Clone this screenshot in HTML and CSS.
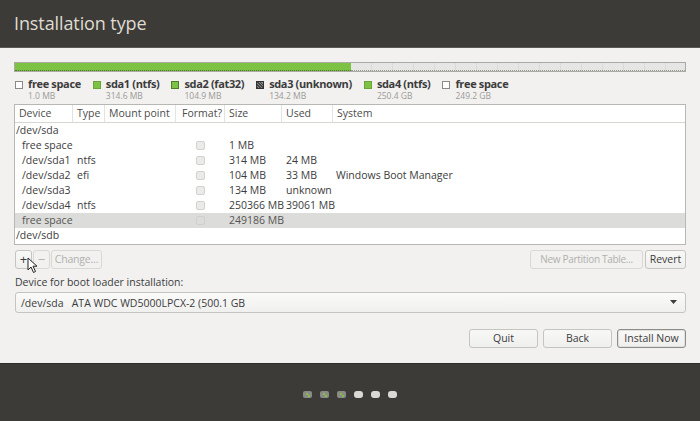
FILE: index.html
```html
<!DOCTYPE html>
<html>
<head>
<meta charset="utf-8">
<link rel="stylesheet" href="styles.css">
</head>
<body>
<div class="window">
  <header class="titlebar">Installation type</header>
  <main class="content">
    <div class="pbar">
      <div class="pbar-used" style="width:50.1%"></div>
      <div class="pbar-free"></div>
    </div>
    <div class="legend">
      <div class="leg"><span class="sw sw-free"></span><div><div class="leg-name">free space</div><div class="leg-size">1.0 MB</div></div></div>
      <div class="leg"><span class="sw sw-green"></span><div><div class="leg-name">sda1 (ntfs)</div><div class="leg-size">314.6 MB</div></div></div>
      <div class="leg"><span class="sw sw-green2"></span><div><div class="leg-name">sda2 (fat32)</div><div class="leg-size">104.9 MB</div></div></div>
      <div class="leg"><span class="sw sw-dark"></span><div><div class="leg-name">sda3 (unknown)</div><div class="leg-size">134.2 MB</div></div></div>
      <div class="leg"><span class="sw sw-green"></span><div><div class="leg-name">sda4 (ntfs)</div><div class="leg-size">250.4 GB</div></div></div>
      <div class="leg"><span class="sw sw-free"></span><div><div class="leg-name">free space</div><div class="leg-size">249.2 GB</div></div></div>
    </div>
    <div class="table">
      <div class="row head">
        <div class="c c1">Device</div><div class="c c2">Type</div><div class="c c3">Mount point</div><div class="c c4">Format?</div><div class="c c5">Size</div><div class="c c6">Used</div><div class="c c7">System</div>
      </div>
      <div class="body">
        <div class="row"><div class="c c1 top">/dev/sda</div><div class="c c2"></div><div class="c c3"></div><div class="c c4"></div><div class="c c5"></div><div class="c c6"></div><div class="c c7"></div></div>
        <div class="row"><div class="c c1 sub">free space</div><div class="c c2"></div><div class="c c3"></div><div class="c c4"><span class="cb"></span></div><div class="c c5">1 MB</div><div class="c c6"></div><div class="c c7"></div></div>
        <div class="row"><div class="c c1 sub">/dev/sda1</div><div class="c c2">ntfs</div><div class="c c3"></div><div class="c c4"><span class="cb"></span></div><div class="c c5">314 MB</div><div class="c c6">24 MB</div><div class="c c7"></div></div>
        <div class="row"><div class="c c1 sub">/dev/sda2</div><div class="c c2">efi</div><div class="c c3"></div><div class="c c4"><span class="cb"></span></div><div class="c c5">104 MB</div><div class="c c6">33 MB</div><div class="c c7">Windows Boot Manager</div></div>
        <div class="row"><div class="c c1 sub">/dev/sda3</div><div class="c c2"></div><div class="c c3"></div><div class="c c4"><span class="cb"></span></div><div class="c c5">134 MB</div><div class="c c6">unknown</div><div class="c c7"></div></div>
        <div class="row"><div class="c c1 sub">/dev/sda4</div><div class="c c2">ntfs</div><div class="c c3"></div><div class="c c4"><span class="cb"></span></div><div class="c c5">250366 MB</div><div class="c c6">39061 MB</div><div class="c c7"></div></div>
        <div class="row sel"><div class="c c1 sub">free space</div><div class="c c2"></div><div class="c c3"></div><div class="c c4"><span class="cb cb-sel"></span></div><div class="c c5">249186 MB</div><div class="c c6"></div><div class="c c7"></div></div>
        <div class="row"><div class="c c1 top">/dev/sdb</div><div class="c c2"></div><div class="c c3"></div><div class="c c4"></div><div class="c c5"></div><div class="c c6"></div><div class="c c7"></div></div>
      </div>
    </div>
    <div class="tools">
      <div class="tools-left">
        <button class="btn sq">+</button>
        <button class="btn sq dis">&minus;</button>
        <button class="btn dis chg">Change...</button>
        <svg class="cursor" width="12" height="17" viewBox="0 0 12 17"><path d="M1 1 L1 13 L4 10 L6.5 15.5 L8.5 14.5 L6 9.2 L10 9.2 Z" fill="#fff" stroke="#222" stroke-width="1" stroke-linejoin="round"/></svg>
      </div>
      <div class="tools-right">
        <button class="btn dis npt">New Partition Table...</button>
        <button class="btn rev">Revert</button>
      </div>
    </div>
    <div class="label">Device for boot loader installation:</div>
    <div class="combo">
      <span class="combo-text">/dev/sda&nbsp;&nbsp;&nbsp;ATA WDC WD5000LPCX-2 (500.1 GB</span>
      <svg width="7" height="5" viewBox="0 0 7 5"><path d="M0 0 L7 0 L3.5 4 Z" fill="#3c3c3c"/></svg>
    </div>
    <div class="actions">
      <button class="btn act">Quit</button>
      <button class="btn act">Back</button>
      <button class="btn act def">Install Now</button>
    </div>
  </main>
  <footer class="footer">
    <div class="dots">
      <span class="dot done"><i></i><i></i></span>
      <span class="dot done"><i></i><i></i></span>
      <span class="dot done"><i></i><i></i></span>
      <span class="dot todo"></span>
      <span class="dot todo"></span>
      <span class="dot todo"></span>
    </div>
  </footer>
</div>
</body>
</html>
```
FILE: styles.css
```css
* { box-sizing: border-box; }
html, body { margin: 0; padding: 0; }
body {
  width: 700px;
  height: 421px;
  overflow: hidden;
  font-family: "Open Sans", "Noto Sans", sans-serif;
  color: #3c3c3c;
  background: #f2f1f0;
}
.window { display: flex; flex-direction: column; height: 421px; }
.titlebar {
  height: 48px;
  background: #3c3b37;
  color: #dfdbd2;
  font-size: 18px;
  padding: 11px 0 0 14px;
  letter-spacing: -0.1px;
  border-bottom: 1px solid #5a5955;
}
.content {
  height: 315px;
  background: #f2f1f0;
  padding: 14px 14px 0 14px;
  display: flex;
  flex-direction: column;
}
.pbar {
  height: 10px;
  display: flex;
  border: 1px solid #a9a9a5;
  background: #e2e2e0;
}
.pbar-used {
  height: 100%;
  background: #7dc242;
  border-bottom: 1px dotted #4e7a2a;
}
.pbar-free {
  flex: 1;
  background: repeating-linear-gradient(90deg, #e6e6e4 0 20px, #dadad8 20px 21px);
  border-bottom: 1px dotted #9a9a96;
}
.legend {
  display: flex;
  gap: 12px;
  padding: 5px 0 0 1px;
  height: 32px;
}
.leg { display: flex; gap: 5px; align-items: flex-start; }
.sw {
  width: 8px; height: 8px; margin-top: 4px;
  border: 1px solid #8a8a86;
  flex: none;
}
.sw-free { background: #fff; }
.sw-green { background: #7dc242; border-color: #6aa637; }
.sw-green2 { background: #7dc242; border-color: #4c7d29; }
.sw-dark { background: repeating-linear-gradient(45deg, #444 0 1px, #888 1px 2px); border-color: #333; }
.leg-name { font-size: 11px; font-weight: 700; line-height: 14px; color: #3c3c3c; letter-spacing: -0.35px; }
.leg-size { font-size: 8.5px; line-height: 9px; color: #9a9a96; }
.table {
  border: 1px solid #b7b7b3;
  background: #fff;
  height: 141px;
  font-size: 10.5px;
  display: flex;
  flex-direction: column;
}
.row {
  display: grid;
  grid-template-columns: 58px 32px 71px 49px 57px 51px 1fr;
  height: 15px;
  line-height: 15px;
}
.row.head {
  height: 18px;
  line-height: 17px;
  border-bottom: 1px solid #d6d6d3;
  color: #4c4c4c;
}
.head .c { padding-left: 4px; border-right: 1px solid #e3e3e0; }
.head .c7 { border-right: none; }
.head .c1 { padding-left: 4px; }
.body { padding-top: 0; }
.c { white-space: nowrap; overflow: visible; padding-left: 4px; }
.c1.top { padding-left: 1px; }
.c1.sub { padding-left: 7px; }
.c4 { display: flex; justify-content: center; align-items: center; padding-left: 0; }
.c7 { padding-left: 3px; }
.cb {
  width: 9px; height: 9px;
  border: 1px solid #d2d2cf;
  border-radius: 2px;
  background: #ebebea;
}
.cb-sel { background: #dcdcda; border-color: #cfcfcc; }
.row.sel { background: #dcdcda; color: #555; }
.tools {
  display: flex;
  justify-content: space-between;
  margin-top: 5px;
  height: 19px;
  padding: 0 0 0 1px;
}
.tools-left { display: flex; gap: 1px; position: relative; }
.tools-right { display: flex; gap: 2px; }
.btn {
  font-family: "Open Sans", "Noto Sans", sans-serif;
  font-size: 10.5px;
  height: 19px;
  padding: 0 5px;
  border: 1px solid #c4c4c0;
  border-radius: 3px;
  background: linear-gradient(#f8f8f7, #efefed);
  color: #3c3c3c;
  line-height: 17px;
  white-space: nowrap;
}
.btn.dis { color: #b0b0ac; border-color: #d8d8d5; background: #f2f1f0; }
.sq { width: 17px; padding: 0; font-size: 13px; line-height: 15px; }
.chg { width: 51px; padding: 0 2px; letter-spacing: -0.2px; }
.npt { width: 113px; padding: 0 2px; letter-spacing: -0.3px; font-size: 10px; }
.rev { width: 41px; padding: 0 2px; }
.cursor { position: absolute; left: 12px; top: 7px; }
.label {
  font-size: 10.5px;
  margin-top: 5px;
  height: 16px;
  line-height: 16px;
  padding-left: 1px;
}
.combo {
  margin-top: 2px;
  margin-left: 1px;
  height: 21px;
  border: 1px solid #c4c4c0;
  border-radius: 3px;
  background: linear-gradient(#fafaf9, #f0f0ee);
  display: flex;
  justify-content: space-between;
  align-items: center;
  padding: 0 8px 0 5px;
  font-size: 10.5px;
}
.actions {
  display: flex;
  justify-content: flex-end;
  gap: 5px;
  margin-top: 16px;
}
.act { width: 69px; }
.def { border: 1px solid #8c8c88; box-shadow: inset 0 0 0 1px #e0e0dc; }
.footer {
  flex: 1;
  background: #3c3b37;
  border-top: 1px solid #2e2d2a;
  display: flex;
  justify-content: center;
  align-items: flex-start;
  padding-top: 27px;
}
.dots { display: flex; gap: 8px; }
.dot {
  width: 9px; height: 7px;
  border-radius: 2px;
  position: relative;
}
.dot.done { background: #8b8a86; }
.dot.done i {
  position: absolute;
  width: 2px; height: 2px;
  background: #7dc242;
}
.dot.done i:first-child { left: 3px; top: 2px; }
.dot.done i:last-child { left: 5px; top: 4px; }
.dot.todo { background: #d9d9d6; border-radius: 3px; }
```
